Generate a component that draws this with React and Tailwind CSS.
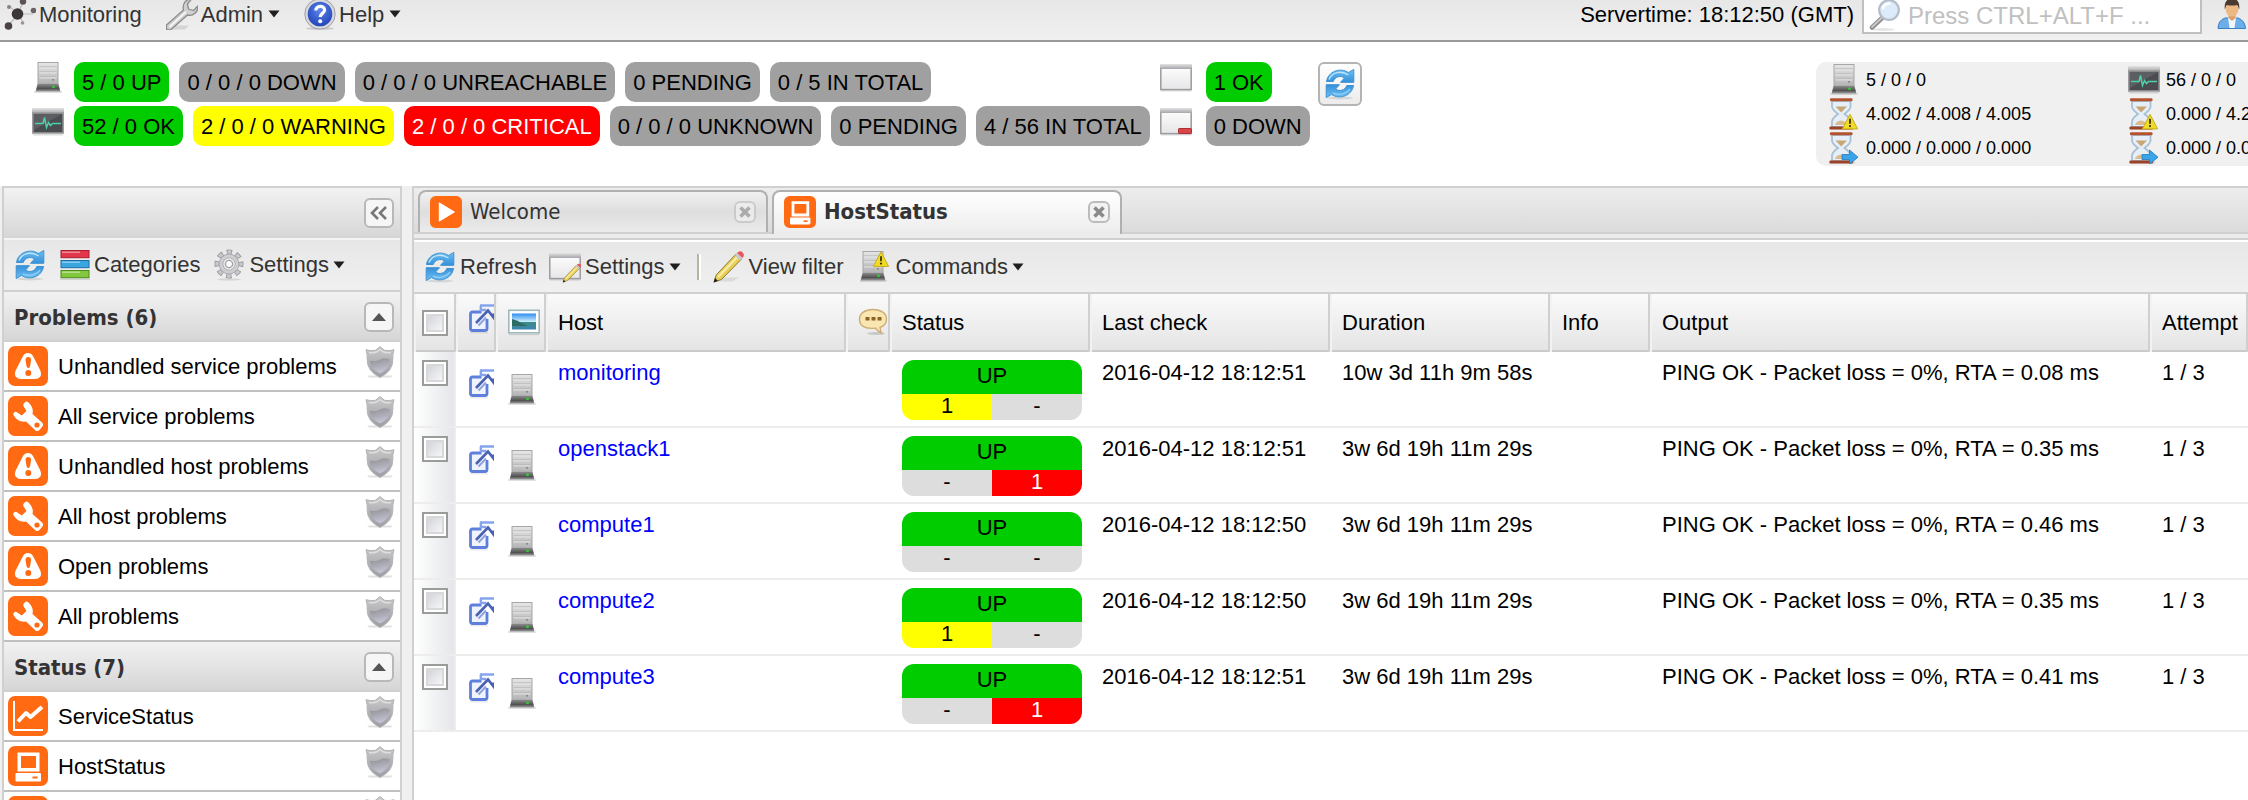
import React from "react";

const Svg = ({ children, className = "h-8 w-8", box = "0 0 32 32" }) => (
  <svg viewBox={box} aria-hidden="true" className={"block shrink-0 " + className}>
    {children}
  </svg>
);

const Gradients = () => (
  <svg aria-hidden="true" className="absolute h-0 w-0">
    <defs>
      <linearGradient id="steel" x1="0" y1="0" x2="0" y2="1">
        <stop offset="0" stopColor="#e6e6e6" />
        <stop offset="1" stopColor="#b4b4b4" />
      </linearGradient>
      <linearGradient id="base" x1="0" y1="0" x2="0" y2="1">
        <stop offset="0" stopColor="#8a8a8a" />
        <stop offset="1" stopColor="#3f3f3f" />
      </linearGradient>
      <linearGradient id="sky" x1="0" y1="0" x2="0" y2="1">
        <stop offset="0" stopColor="#6cc0f2" />
        <stop offset="1" stopColor="#3590da" />
      </linearGradient>
      <linearGradient id="pane" x1="0" y1="0" x2="0" y2="1">
        <stop offset="0" stopColor="#ffffff" />
        <stop offset="1" stopColor="#e6e6e8" />
      </linearGradient>
      <linearGradient id="bar" x1="0" y1="0" x2="0" y2="1">
        <stop offset="0" stopColor="#e4e4e4" />
        <stop offset="1" stopColor="#a4a4aa" />
      </linearGradient>
      <linearGradient id="shield" x1="0" y1="0" x2="0" y2="1">
        <stop offset="0" stopColor="#c9c9c9" />
        <stop offset="1" stopColor="#9c9ca4" />
      </linearGradient>
      <linearGradient id="shieldIn" x1="0" y1="0" x2="0.3" y2="1">
        <stop offset="0" stopColor="#8d8d8f" />
        <stop offset="1" stopColor="#c4c4d6" />
      </linearGradient>
      <radialGradient id="help" cx="0.5" cy="0.35" r="0.7">
        <stop offset="0" stopColor="#5e86ec" />
        <stop offset="1" stopColor="#1d3fb4" />
      </radialGradient>
      <linearGradient id="photo" x1="0" y1="0" x2="0" y2="1">
        <stop offset="0" stopColor="#2f8df0" />
        <stop offset="0.5" stopColor="#c9ecfb" />
        <stop offset="0.55" stopColor="#3d8b84" />
        <stop offset="1" stopColor="#3f86b4" />
      </linearGradient>
    </defs>
  </svg>
);

const ServerShape = () => (
  <>
    <rect x="2" y="28.6" width="28" height="2.4" rx="1.2" fill="#000" opacity="0.12" />
    <rect x="6" y="0.5" width="20" height="21.5" fill="url(#steel)" stroke="#a6a6a6" />
    <path d="M7.5 5.8h17M7.5 10.8h17M7.5 15.8h17" stroke="#f0f0f0" strokeWidth="1" />
    <path d="M7.5 4.8h17M7.5 9.8h17M7.5 14.8h17" stroke="#b4b4b4" strokeWidth="0.8" />
    <circle cx="21" cy="17.8" r="0.9" fill="#777" />
    <path d="M5.5 22h21l1.5 6H4z" fill="url(#base)" />
    <rect x="4" y="27.4" width="24" height="2" fill="#858585" />
    <circle cx="21.5" cy="24.8" r="1.5" fill="#35c435" />
  </>
);
const ServerIcon = () => (
  <Svg>
    <ServerShape />
  </Svg>
);
const WarnTriangle = ({ x, y }) => (
  <g transform={`translate(${x} ${y})`}>
    <path d="M8 0.8 15.6 15.4H0.4z" fill="#f0dc28" stroke="#c9ae12" strokeLinejoin="round" />
    <path d="M8 5.2v5" stroke="#3a3200" strokeWidth="1.8" />
    <circle cx="8" cy="12.6" r="1.1" fill="#3a3200" />
  </g>
);
const ServiceIcon = () => (
  <Svg>
    <rect x="0" y="2" width="32" height="5.5" fill="url(#bar)" />
    <rect x="0.8" y="7" width="30.4" height="20" fill="#4a4c52" stroke="#9c9c9c" strokeWidth="1.6" />
    <path d="M2 8h28L2 24z" fill="#fff" opacity="0.1" />
    <path d="M3 17.5h8l1.5-6 2 10 2-5 2 3 2-2h8.5" fill="none" stroke="#4fd0a6" strokeWidth="1.5" />
    <rect x="1" y="28" width="30" height="1.6" fill="#000" opacity="0.12" />
  </Svg>
);
const WindowShape = () => (
  <>
    <rect x="0.8" y="2.8" width="30.4" height="24.8" fill="url(#pane)" stroke="#9b9b9f" strokeWidth="1.5" />
    <rect x="0" y="2" width="32" height="5" fill="url(#bar)" />
    <rect x="1" y="28.4" width="30" height="1.2" fill="#000" opacity="0.12" />
  </>
);
const WindowIcon = () => (
  <Svg>
    <WindowShape />
  </Svg>
);
const WindowDownIcon = () => (
  <Svg>
    <WindowShape />
    <rect x="18.5" y="22.5" width="13" height="5" rx="0.8" fill="#d8464a" stroke="#b02c30" />
  </Svg>
);
const Pencil = ({ t }) => (
  <g transform={t}>
    <path d="M1 31l2.2-7L23 3l5.5 5L8.5 28.5z" fill="#e9cf58" stroke="#8e7a2c" strokeWidth="1" strokeLinejoin="round" />
    <path d="M5 26 25 5.5" stroke="#f9edab" strokeWidth="2" />
    <path d="M21.5 4.5 24 2l5.5 5-2.5 2.5z" fill="#c9c9c9" />
    <path d="M24 2q3-3 5.6-.6T29.5 7z" fill="#e8545c" />
    <path d="M0.5 31.5 2 27l3 3z" fill="#222" />
  </g>
);
const PencilIcon = () => (
  <Svg>
    <path d="M4 30.5h16l6-4H10z" fill="#000" opacity="0.08" />
    <Pencil t="" />
  </Svg>
);
const WindowEditIcon = () => (
  <Svg>
    <WindowShape />
    <Pencil t="translate(13.5 12.5) scale(0.6)" />
  </Svg>
);
const ServerWarnIcon = () => (
  <Svg>
    <g transform="translate(-3 0)">
      <ServerShape />
    </g>
    <WarnTriangle x="13" y="0" />
  </Svg>
);
const RefreshIcon = () => (
  <Svg>
    <ellipse cx="16" cy="30" rx="13" ry="1.5" fill="#000" opacity="0.1" />
    {["", "rotate(180 16 15.5)"].map((t) => (
      <path
        key={t}
        transform={t}
        d="M2.5 13.5C4 3.5 16-1 24.5 4.5L29.8 1.4V14.300H16.500l4-4.4C16.500 7 10.8 8.800 9.200 13.500z"
        fill="url(#sky)"
        stroke="#3f92d2"
        strokeWidth="1"
        strokeLinejoin="round"
      />
    ))}
    <path d="M5 11.5C8 4 17 2 24.5 7" fill="none" stroke="#bfe4fb" strokeWidth="1.4" />
    <path d="M9 25c5 2.5 13 1.5 17-4" fill="none" stroke="#8fcbf5" strokeWidth="1.4" />
  </Svg>
);
const NodesIcon = () => (
  <Svg>
    <path d="M14 16 4 28M14 16 19 4M14 16h15M14 16 5 8M14 16l5 8" stroke="#bbb" strokeWidth="1.2" />
    <circle cx="13.5" cy="16" r="5.8" fill="#3d3638" />
    <circle cx="4.5" cy="28" r="3.8" fill="#4a4244" />
    <circle cx="19" cy="3.5" r="3.2" fill="#5b5355" />
    <circle cx="29.5" cy="12.5" r="2.8" fill="#6a6264" />
    <circle cx="5" cy="9" r="2" fill="#8a8284" />
    <circle cx="18.5" cy="25" r="1.8" fill="#9a9294" />
  </Svg>
);
const WrenchIcon = () => (
  <Svg>
    <path d="M3 31.5h16l4-4H9z" fill="#000" opacity="0.1" />
    <path
      d="M0.5 27 17.5 12C16 6 20 0.8 25.5 1L21.5 6l1 5 5 1.5 4.3-4.5C32.5 14 27 18.5 21.5 17L4.5 32H0.5z"
      fill="#cfcfcf"
      stroke="#8b8b8b"
      strokeWidth="1.3"
      strokeLinejoin="round"
    />
    <path d="M3.5 29 20 13.8" stroke="#f7f7f7" strokeWidth="1.8" />
  </Svg>
);
const HelpIcon = () => (
  <Svg>
    <ellipse cx="16" cy="30.5" rx="14" ry="1.5" fill="#000" opacity="0.15" />
    <circle cx="16" cy="16" r="15.2" fill="#d7d7dc" stroke="#9fa0a6" />
    <circle cx="16" cy="16" r="12.3" fill="url(#help)" />
    <path d="M11.8 12.5c0-5.5 8.8-5.5 8.8-.5 0 3.5-4.4 3.3-4.4 7" fill="none" stroke="#fff" strokeWidth="3.2" />
    <circle cx="16.2" cy="23.2" r="2" fill="#fff" />
  </Svg>
);
const SearchIcon = () => (
  <Svg>
    <ellipse cx="14" cy="29.5" rx="12" ry="1.5" fill="#000" opacity="0.1" />
    <path d="M3 27.5 13 18" stroke="#8d8d8d" strokeWidth="4.5" strokeLinecap="round" />
    <path d="M3 27 13 17.5" stroke="#c9c9c9" strokeWidth="1.8" strokeLinecap="round" />
    <circle cx="20" cy="10" r="9.8" fill="#dcebf9" stroke="#b4bcc8" strokeWidth="2.2" />
    <path d="M13.5 9q2-6 8-5.5" fill="none" stroke="#fff" strokeWidth="2.6" />
  </Svg>
);
const UserIcon = () => (
  <Svg>
    <path d="M2 30.5q0-8 7-10.5h13q7 2.5 7.5 10.5z" fill="#6aaeea" stroke="#3c7fc0" />
    <path d="M12 19.5h8L18.5 30h-5z" fill="#f2f6fa" />
    <path d="M12.5 15h7v5l-3.500 3-3.500-3z" fill="#dda06a" />
    <ellipse cx="16" cy="10.5" rx="6.5" ry="8" fill="#ecb985" />
    <path d="M8.8 11.5C8 4 11 0.5 16 0.5S24 4 23.2 11.5L21.5 7q-5.500 1-11 0z" fill="#4a3a30" />
  </Svg>
);
const Hourglass = ({ children }) => (
  <Svg>
    <rect x="1" y="29.5" width="26" height="2" fill="#000" opacity="0.12" />
    <path
      d="M4 3h18.5v5.5q0 3-6 7.5 6 4.500 6 7.500V29H4v-5.500q0-3 6-7.500-6-4.500-6-7.500z"
      fill="#e6eff7"
      stroke="#a6c0d4"
      strokeWidth="1.8"
    />
    <path d="M7.5 8.500H19l-5.800 6z" fill="#c9a774" />
    <path d="M7 27q1-4 6-4.500 5 .5 6 4.500z" fill="#d9bc90" />
    <rect x="2" y="0.3" width="22.5" height="3" rx="1" fill="#b4532e" />
    <rect x="1.5" y="28.6" width="23.5" height="3" rx="1" fill="#9c4226" />
    {children}
  </Svg>
);
const HourglassWarnIcon = () => (
  <Hourglass>
    <WarnTriangle x="14" y="15.5" />
  </Hourglass>
);
const HourglassNextIcon = () => (
  <Hourglass>
    <path d="M14 22.5h7.5V18l8.5 7.2-8.500 7v-4.700H14z" fill="#3aa4ea" stroke="#2378bc" strokeWidth="0.8" />
  </Hourglass>
);
const CategoriesIcon = () => (
  <Svg>
    {[
      [1, "#e2364a", "#a81c30"],
      [11, "#3aa6e0", "#1c6ea4"],
      [21, "#82c83c", "#4c8c1c"],
    ].map(([y, fill, edge]) => (
      <g key={y}>
        <rect x="1" y={y + 0.5} width="28" height="7.2" fill={fill} stroke={edge} />
        <path d={`M2 ${y + 2.2}h18`} stroke="#fff" opacity="0.45" strokeWidth="1.4" />
      </g>
    ))}
    <rect x="0" y="29.5" width="30" height="1.5" fill="#000" opacity="0.12" />
  </Svg>
);
const GearIcon = () => (
  <Svg>
    <ellipse cx="15" cy="30.5" rx="12" ry="1.2" fill="#000" opacity="0.1" />
    <circle cx="15" cy="15" r="12" fill="none" stroke="#98989a" strokeWidth="5" strokeDasharray="5.42 4" strokeDashoffset="2.7" />
    <circle cx="15" cy="15" r="12" fill="none" stroke="#c8c8cc" strokeWidth="3.4" strokeDasharray="3.82 5.6" strokeDashoffset="1.9" />
    <circle cx="15" cy="15" r="8" fill="#efeff1" stroke="#a8a8ac" strokeWidth="4.6" />
    <circle cx="15" cy="15" r="8" fill="none" stroke="#cdcdd2" strokeWidth="3" />
    <circle cx="15" cy="15" r="3.6" fill="#fafafa" stroke="#a2a2a6" strokeWidth="1.4" />
  </Svg>
);
const ShieldIcon = () => (
  <Svg>
    <path d="M5 31.5h22l2-2H3z" fill="#000" opacity="0.12" />
    <path
      d="M16 0.6 20.5 4.3Q25 5.4 30 3.7q-1.6 4.5-1.2 10Q29 25 16 31.5 3 25 3.2 13.7 3.6 8.2 2 3.7q5 1.7 9.500.6z"
      fill="url(#shield)"
      stroke="#b2b2b4"
    />
    <path d="M5 6.5q3.500.8 7.500-.5L16 3.5 19.5 6q4 1.300 7.500.5" fill="none" stroke="#dedede" strokeWidth="1.4" />
    <path d="M6 14.5q5.500 1.500 10-1t10 0q0 9-10 14-10-4.500-10-13z" fill="url(#shieldIn)" />
  </Svg>
);
const LinkIcon = () => (
  <Svg box="0 0 26 32" className="h-8 w-[26px]">
    <path d="M19 16v9.5q0 2-2 2H4.5q-2 0-2-2V11q0-2 2-2h9" fill="#eef3fe" stroke="#5f7fdc" strokeWidth="2.8" />
    <path d="M12 2.5h14M12.8 2.5v4.500h5.500" fill="none" stroke="#86a4ee" strokeWidth="2.4" />
    <path d="M8 20 20 7.5l5.500 7v-4" fill="none" stroke="#4a62b4" strokeWidth="2.6" />
    <path d="M10.5 22.5 18 14.5" stroke="#8fa4dc" strokeWidth="2" />
    <rect x="2" y="29" width="18" height="1.5" fill="#000" opacity="0.08" />
  </Svg>
);
const PictureIcon = () => (
  <Svg>
    <rect x="0.8" y="3.3" width="30.4" height="22.5" fill="#fff" stroke="#9eb8bc" strokeWidth="1.6" />
    <rect x="4" y="6.5" width="24" height="16" fill="url(#photo)" />
    <path d="M4 12q6 1 10 4.500L20 19H4z" fill="#2c6c64" />
    <rect x="1" y="27" width="30" height="1.2" fill="#000" opacity="0.12" />
  </Svg>
);
const CommentIcon = () => (
  <Svg box="0 0 30 32" className="h-8 w-[30px]">
    <ellipse cx="18" cy="26.5" rx="9" ry="1.5" fill="#000" opacity="0.15" />
    <path
      d="M15 2.5c8 0 13.5 4 13.5 9.500 0 4-2.500 7-6.500 8.500q.5 3.500 1.500 5.500-4-1.500-6-4.800-16 1.300-16-9.200C1.5 6.500 7 2.500 15 2.500z"
      fill="#f9e6b0"
      stroke="#cfae74"
      strokeWidth="1.4"
    />
    <path d="M7.5 10h4v3.500h-4zM13.500 10h4v3.500h-4zM19.500 10h4v3.500h-4z" fill="#8c6428" />
  </Svg>
);

const Tile = ({ children, className = "h-10 w-10" }) => (
  <Svg box="0 0 40 40" className={className}>
    <rect width="40" height="40" rx="7" fill="#ff6a13" />
    {children}
  </Svg>
);
const AlertTile = () => (
  <Tile>
    <path
      d="M20 7q3.600 0 5.500 4l6.800 13.500q1.600 4-.3 6.500-1.800 2-5 2H13q-3.200 0-5-2-1.900-2.500-.3-6.500L14.500 11Q16.400 7 20 7z"
      fill="#fff"
    />
    <path d="M17.5 14q0-3 2.800-3t2.800 3l-1 6q-.4 2-1.800 2t-1.800-2z" fill="#ff6a13" />
    <circle cx="20.3" cy="27" r="3" fill="#ff6a13" />
  </Tile>
);
const WrenchTile = () => (
  <Tile>
    <path
      d="M17 6.200q1.500-1.500 3.500.3 5.500 5 4 11.500l9.500 8.500q2 2 .2 4.200L31.500 34q-2 2-4.200.2L18 25.500q-7.500 1.500-12.300-6-1.200-2.200.6-3.300 1.500-.9 3 .3l4.400 3 4.800-4.500-3-4.700q-.8-1.600.3-2.800z"
      fill="#fff"
    />
    <circle cx="29" cy="29" r="2.6" fill="#ff6a13" />
  </Tile>
);
const ChartTile = () => (
  <Tile>
    <path d="M6 5v29h29" fill="none" stroke="#fff" strokeWidth="2" />
    <path d="M10 25.500 18 17l4.500 4L34 11" fill="none" stroke="#fff" strokeWidth="4" strokeLinejoin="round" />
  </Tile>
);
const HostTile = ({ className }) => (
  <Tile className={className}>
    <path fillRule="evenodd" d="M9.500 6.500h22v19h-22zM13 10v12h15V10z" fill="#fff" />
    <path d="M7.500 28q0-1 1-1h23.500q1 0 1 1v6.500q0 1-1 1H8.500q-1 0-1-1z" fill="#fff" />
    <rect x="24.500" y="30.500" width="5" height="2" fill="#ff6a13" />
  </Tile>
);
const PlayTile = ({ className }) => (
  <Tile className={className}>
    <path d="M11 7.500 31.500 20 11 32.500z" fill="#fff" />
  </Tile>
);

const Caret = () => (
  <Svg box="0 0 12 8" className="h-2 w-3">
    <path d="M0.500 0.500h11L6 7.500z" fill="#1f1f1f" />
  </Svg>
);

const tones = {
  green: "bg-[#00cc00] text-black",
  gray: "bg-[#a0a0a0] text-black",
  yellow: "bg-[#ffff00] text-black",
  red: "bg-[#ff0000] text-white",
};
const Badge = ({ tone, children }) => (
  <a href="#" className={"flex h-10 items-center whitespace-nowrap rounded-[10px] px-2 pt-0.5 " + tones[tone]}>
    {children}
  </a>
);

const Label = ({ children }) => <span className="pt-0.5">{children}</span>;

const TopBar = () => (
  <header className="flex h-[42px] shrink-0 items-start border-b-2 border-[#999999] bg-linear-to-b from-[#e7e7e7] to-[#f0f0f0] pl-1 text-[#333333]">
    <nav className="flex h-7 items-center gap-6">
      <a href="#" className="flex items-center gap-[3px]">
        <NodesIcon />
        <Label>Monitoring</Label>
      </a>
      <button type="button" className="flex items-center gap-[3px]">
        <WrenchIcon />
        <Label>Admin</Label>
        <span className="pl-0.5">
          <Caret />
        </span>
      </button>
      <button type="button" className="flex items-center gap-[3px]">
        <HelpIcon />
        <Label>Help</Label>
        <span className="pl-0.5">
          <Caret />
        </span>
      </button>
    </nav>
    <p className="ml-auto flex h-7 items-center whitespace-nowrap text-black">
      <Label>Servertime: 18:12:50 (GMT)</Label>
    </p>
    <label className="ml-2 flex h-[34px] w-[340px] items-start gap-[7px] border-x-2 border-b-2 border-[#c0c0c0] bg-white pl-[5px]">
      <SearchIcon />
      <input
        type="text"
        aria-label="Search"
        placeholder="Press CTRL+ALT+F ..."
        className="h-8 min-w-0 flex-1 bg-transparent text-2xl leading-7 text-black outline-none placeholder:text-[#c0c0c0]"
      />
    </label>
    <button type="button" aria-label="User" className="ml-3.5 flex h-7 items-center">
      <UserIcon />
    </button>
  </header>
);

const Stat = ({ icon, children }) => (
  <div className="flex h-[34px] w-[300px] shrink-0 items-center gap-1.5">
    {icon}
    {children}
  </div>
);

const Summary = () => (
  <section className="flex h-36 shrink-0 items-start bg-white pl-8 pt-5">
    <div className="flex flex-col gap-1">
      <div className="flex gap-2.5">
        <ServerIcon />
        <Badge tone="green">5 / 0 UP</Badge>
        <Badge tone="gray">0 / 0 / 0 DOWN</Badge>
        <Badge tone="gray">0 / 0 / 0 UNREACHABLE</Badge>
        <Badge tone="gray">0 PENDING</Badge>
        <Badge tone="gray">0 / 5 IN TOTAL</Badge>
      </div>
      <div className="flex gap-2.5">
        <ServiceIcon />
        <Badge tone="green">52 / 0 OK</Badge>
        <Badge tone="yellow">2 / 0 / 0 WARNING</Badge>
        <Badge tone="red">2 / 0 / 0 CRITICAL</Badge>
        <Badge tone="gray">0 / 0 / 0 UNKNOWN</Badge>
        <Badge tone="gray">0 PENDING</Badge>
        <Badge tone="gray">4 / 56 IN TOTAL</Badge>
      </div>
    </div>
    <div className="ml-2.5 flex flex-col gap-1">
      <div className="flex gap-3.5">
        <WindowIcon />
        <Badge tone="green">1 OK</Badge>
      </div>
      <div className="flex gap-3.5">
        <WindowDownIcon />
        <Badge tone="gray">0 DOWN</Badge>
      </div>
    </div>
    <button
      type="button"
      aria-label="Refresh status"
      className="ml-2 flex h-11 w-11 items-center justify-center rounded-md border-2 border-[#b4b4b4] bg-linear-to-b from-white to-[#ececec]"
    >
      <RefreshIcon />
    </button>
    <div className="ml-auto flex w-[432px] flex-col overflow-hidden rounded-l-[10px] bg-[#f0f0f0] py-px pl-3 text-lg leading-6 text-black">
      <div className="flex">
        <Stat icon={<ServerIcon />}>5 / 0 / 0</Stat>
        <Stat icon={<ServiceIcon />}>56 / 0 / 0</Stat>
      </div>
      <div className="flex">
        <Stat icon={<HourglassWarnIcon />}>4.002 / 4.008 / 4.005</Stat>
        <Stat icon={<HourglassWarnIcon />}>0.000 / 4.2</Stat>
      </div>
      <div className="flex">
        <Stat icon={<HourglassNextIcon />}>0.000 / 0.000 / 0.000</Stat>
        <Stat icon={<HourglassNextIcon />}>0.000 / 0.0</Stat>
      </div>
    </div>
  </section>
);

const ToolButton = ({ label, children }) => (
  <button
    type="button"
    aria-label={label}
    className="flex h-[30px] w-[30px] shrink-0 items-center justify-center rounded-md border-2 border-[#b8b8b8] bg-[#f6f6f6]"
  >
    {children}
  </button>
);

const titleFont = "font-['DejaVu_Sans_Condensed','Noto_Sans',sans-serif]";

const SectionTitle = ({ children }) => (
  <div className="flex h-[50px] shrink-0 items-center justify-between border-b-2 border-[#d0d0d0] bg-linear-to-b from-[#f2f2f2] to-[#d6d6d6] pl-2.5 pr-1.5 pt-0.5">
    <h2 className={"pt-0.5 text-[22px] font-bold leading-7 text-[#333333] " + titleFont}>{children}</h2>
    <ToolButton label="Collapse section">
      <Svg box="0 0 14 8" className="h-2 w-3.5">
        <path d="M0 8 7 0l7 8z" fill="#555" />
      </Svg>
    </ToolButton>
  </div>
);

const NavItem = ({ icon, children }) => (
  <li className="flex h-[50px] shrink-0 items-start border-b-2 border-[#c0c0c0] pl-1 pr-1 pt-1">
    {icon}
    <a href="#" aria-label={children ? undefined : "More"} className="flex h-10 flex-1 items-center pl-2.5 pt-0.5 text-black">
      {children}
    </a>
    <ShieldIcon />
  </li>
);

const Sidebar = () => (
  <aside className="flex w-[400px] shrink-0 flex-col overflow-hidden border-x-2 border-t-2 border-[#d0d0d0] bg-white">
    <div className="flex h-[52px] shrink-0 items-center justify-end border-b-2 border-[#f4f4f4] bg-linear-to-b from-[#f2f2f2] to-[#d6d6d6] pr-1.5">
      <ToolButton label="Collapse sidebar">
        <Svg box="0 0 18 14" className="h-3.5 w-[18px]">
          <path d="M8 1 2 7l6 6M16 1l-6 6 6 6" fill="none" stroke="#777" strokeWidth="2.6" />
        </Svg>
      </ToolButton>
    </div>
    <div className="flex h-[52px] shrink-0 items-center border-b-2 border-[#d0d0d0] bg-linear-to-b from-[#e7e7e7] to-[#f0f0f0] pl-2.5 text-[#333333]">
      <button type="button" aria-label="Reload">
        <RefreshIcon />
      </button>
      <button type="button" className="ml-3.5 flex items-center gap-0.5">
        <CategoriesIcon />
        Categories
      </button>
      <button type="button" className="ml-3.5 flex items-center gap-[3px]">
        <GearIcon />
        Settings
        <span className="pl-px">
          <Caret />
        </span>
      </button>
    </div>
    <SectionTitle>Problems (6)</SectionTitle>
    <ul>
      <NavItem icon={<AlertTile />}>Unhandled service problems</NavItem>
      <NavItem icon={<WrenchTile />}>All service problems</NavItem>
      <NavItem icon={<AlertTile />}>Unhandled host problems</NavItem>
      <NavItem icon={<WrenchTile />}>All host problems</NavItem>
      <NavItem icon={<AlertTile />}>Open problems</NavItem>
      <NavItem icon={<WrenchTile />}>All problems</NavItem>
    </ul>
    <SectionTitle>Status (7)</SectionTitle>
    <ul>
      <NavItem icon={<ChartTile />}>ServiceStatus</NavItem>
      <NavItem icon={<HostTile />}>HostStatus</NavItem>
      <NavItem icon={<AlertTile />} />
    </ul>
  </aside>
);

const CloseButton = ({ label, dim }) => (
  <button
    type="button"
    aria-label={label}
    className={
      "flex h-[22px] w-[22px] items-center justify-center rounded-md border-2 border-[#bcbcbc] bg-[#f2f2f2] " +
      (dim ? "opacity-60" : "")
    }
  >
    <Svg box="0 0 12 12" className="h-3 w-3">
      <path d="M1.500 1.500l9 9M10.500 1.500l-9 9" stroke="#8a8a8a" strokeWidth="3.600" />
    </Svg>
  </button>
);

const Tabs = () => (
  <div className="flex h-[52px] shrink-0 flex-col border-b-2 border-[#d0d0d0] bg-[#ececec]">
    <div className={"flex h-[46px] items-start gap-1 border-b-2 border-[#d0d0d0] bg-linear-to-b from-[#ededed] to-[#dbdbdb] pl-1 pt-0.5 text-[#333333] " + titleFont}>
      <div className="flex h-[42px] w-[350px] items-start rounded-t-lg border-x-2 border-t-2 border-[#b0b0b0] bg-linear-to-b from-[#f0f0f0] via-[#dedede] to-[#ebebeb] pl-2.5 pr-2.5 pt-1">
        <PlayTile className="h-8 w-8" />
        <button type="button" className="flex h-8 flex-1 items-center pl-2 text-[22px]">
          Welcome
        </button>
        <div className="flex h-8 items-center">
          <CloseButton label="Close Welcome" dim />
        </div>
      </div>
      <div className="flex h-11 w-[350px] items-start rounded-t-lg border-x-2 border-t-2 border-[#b0b0b0] bg-linear-to-b from-white to-[#ececec] pl-2.5 pr-2.5 pt-1">
        <HostTile className="h-8 w-8" />
        <button type="button" className="flex h-8 flex-1 items-center pl-2 text-[22px] font-bold">
          HostStatus
        </button>
        <div className="flex h-8 items-center">
          <CloseButton label="Close HostStatus" />
        </div>
      </div>
    </div>
  </div>
);

const Toolbar = () => (
  <div className="flex h-[54px] shrink-0 items-center border-b-2 border-t-2 border-b-[#d0d0d0] border-t-white bg-linear-to-b from-[#e7e7e7] to-[#f0f0f0] pl-2.5 text-[#333333]">
    <button type="button" className="flex items-center gap-1">
      <RefreshIcon />
      Refresh
    </button>
    <button type="button" className="ml-3 flex items-center gap-1">
      <WindowEditIcon />
      Settings
      <Caret />
    </button>
    <span className="ml-4 h-[26px] w-1 border-l-2 border-r-2 border-l-[#b8b4a4] border-r-white" />
    <button type="button" className="ml-3 flex items-center gap-1">
      <PencilIcon />
      View filter
    </button>
    <button type="button" className="ml-4 flex items-center gap-1">
      <ServerWarnIcon />
      Commands
      <Caret />
    </button>
  </div>
);

const Check = ({ label }) => (
  <input
    type="checkbox"
    aria-label={label}
    className="block h-[26px] w-[26px] appearance-none border-2 border-[#9a9c9a] bg-linear-to-br from-[#c9ccd2] to-white shadow-[inset_0_0_0_2px_#ffffff,inset_0_0_0_4px_#d8d8da]"
  />
);

const hosts = [
  { name: "monitoring", last: "2016-04-12 18:12:51", dur: "10w 3d 11h 9m 58s", rta: "0.08", warn: true, crit: false },
  { name: "openstack1", last: "2016-04-12 18:12:51", dur: "3w 6d 19h 11m 29s", rta: "0.35", warn: false, crit: true },
  { name: "compute1", last: "2016-04-12 18:12:50", dur: "3w 6d 19h 11m 29s", rta: "0.46", warn: false, crit: false },
  { name: "compute2", last: "2016-04-12 18:12:50", dur: "3w 6d 19h 11m 29s", rta: "0.35", warn: true, crit: false },
  { name: "compute3", last: "2016-04-12 18:12:51", dur: "3w 6d 19h 11m 29s", rta: "0.41", warn: false, crit: true },
];

const Th = ({ children, pad = "px-2.5" }) => (
  <th className={"h-[58px] overflow-hidden border-l-2 border-r-2 border-l-[#f2f2f2] border-r-[#d0d0d0] py-0 text-left align-middle font-normal " + pad}>
    {children}
  </th>
);

const Td = ({ children, className = "px-3" }) => (
  <td className={"overflow-hidden whitespace-nowrap pt-[7px] align-top leading-7 " + className}>{children}</td>
);

const HostTable = () => (
  <table className="w-full table-fixed border-separate border-spacing-0 text-black">
    <colgroup>
      <col className="w-[42px]" />
      <col className="w-10" />
      <col className="w-[50px]" />
      <col className="w-[300px]" />
      <col className="w-11" />
      <col className="w-[200px]" />
      <col className="w-60" />
      <col className="w-[220px]" />
      <col className="w-[100px]" />
      <col className="w-[500px]" />
      <col />
    </colgroup>
    <thead className="bg-linear-to-b from-[#fafafa] to-[#e4e4e4] shadow-[inset_0_-2px_0_#cacaca]">
      <tr>
        <Th pad="px-1.5">
          <Check label="Select all hosts" />
        </Th>
        <Th pad="pl-2.5 pr-0">
          <span className="block pb-2">
            <LinkIcon />
          </span>
        </Th>
        <Th>
          <PictureIcon />
        </Th>
        <Th>Host</Th>
        <Th pad="pl-2.5 pr-0">
          <CommentIcon />
        </Th>
        <Th>Status</Th>
        <Th>Last check</Th>
        <Th>Duration</Th>
        <Th>Info</Th>
        <Th>Output</Th>
        <Th>Attempt</Th>
      </tr>
    </thead>
    <tbody>
      {hosts.map((h) => (
        <tr key={h.name} className="h-[76px] *:border-b-2 *:border-[#ededed]">
          <td className="border-r-2 border-r-[#d6d6d6] bg-linear-to-r from-white to-[#e4e6e9] px-2 pt-2 align-top">
            <Check label={"Select " + h.name} />
          </td>
          <td className="overflow-hidden pl-3 pt-4 align-top">
            <LinkIcon />
          </td>
          <td className="pl-2.5 pt-[22px] align-top">
            <ServerIcon />
          </td>
          <Td>
            <a href="#" className="text-[#0000ff]">
              {h.name}
            </a>
          </Td>
          <Td />
          <td className="pb-1.5 pl-3 pr-2 pt-2 align-top">
            <div className="overflow-hidden rounded-xl text-center">
              <div className="h-[34px] bg-[#00cc00] leading-8">UP</div>
              <div className="grid h-[26px] grid-cols-2 leading-6">
                <span className={h.warn ? "bg-[#ffff00]" : "bg-[#dddddd]"}>{h.warn ? "1" : "-"}</span>
                <span className={h.crit ? "bg-[#ff0000] text-white" : "bg-[#dddddd]"}>{h.crit ? "1" : "-"}</span>
              </div>
            </div>
          </td>
          <Td>{h.last}</Td>
          <Td>{h.dur}</Td>
          <Td />
          <Td>PING OK - Packet loss = 0%, RTA = {h.rta} ms</Td>
          <Td>1 / 3</Td>
        </tr>
      ))}
    </tbody>
  </table>
);

export default function App() {
  return (
    <div className="flex h-screen flex-col overflow-hidden bg-white font-['Liberation_Sans',Arial,sans-serif] text-[22px] leading-7">
      <Gradients />
      <TopBar />
      <Summary />
      <div className="flex min-h-0 flex-1 gap-2.5 bg-[#f0f0f0] pl-0.5">
        <Sidebar />
        <main className="flex min-w-0 flex-1 flex-col border-l-2 border-t-2 border-[#d0d0d0] bg-white">
          <Tabs />
          <Toolbar />
          <HostTable />
        </main>
      </div>
    </div>
  );
}
